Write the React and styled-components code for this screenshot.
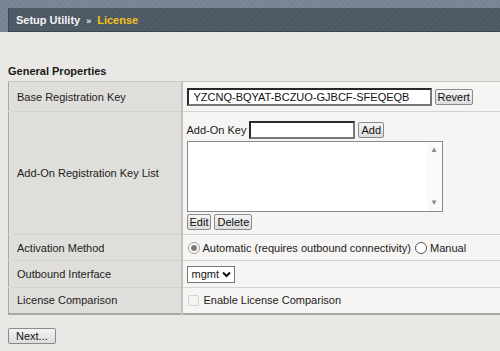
import React from 'react';
import styled, { createGlobalStyle } from 'styled-components';

const Global = createGlobalStyle`
	html, body {
		margin: 0;
		padding: 0;
		background: #e9e8e5;
		font-family: "Liberation Sans", Arial, sans-serif;
		font-size: 11px;
		color: #222;
	}
`;

const App = () => {
	return (
		<Page>
			<Global />
			<HeaderBand>
				<HeaderBar>
					<Crumb>Setup Utility</Crumb>
					<Sep>»</Sep>
					<Current>License</Current>
				</HeaderBar>
			</HeaderBand>
			<Content>
				<SectionTitle>General Properties</SectionTitle>
				<Props>
					<colgroup>
						<col style={{ width: 173 }} />
						<col />
					</colgroup>
					<tbody>
						<Row>
							<Label h={30}>Base Registration Key</Label>
							<Value>
								<Inline>
									<TextInput width={245} defaultValue="YZCNQ-BQYAT-BCZUO-GJBCF-SFEQEQB" />
									<Btn>Revert</Btn>
								</Inline>
							</Value>
						</Row>
						<Row>
							<Label h={123}>Add-On Registration Key List</Label>
							<Value>
								<Stack>
									<Inline>
										<span>Add-On Key</span>
										<TextInput width={106} />
										<Btn>Add</Btn>
									</Inline>
									<ListBox>
										<ScrollBar>
											<Arrow>▲</Arrow>
											<Arrow>▼</Arrow>
										</ScrollBar>
									</ListBox>
									<Inline>
										<Btn>Edit</Btn>
										<Btn>Delete</Btn>
									</Inline>
								</Stack>
							</Value>
						</Row>
						<Row>
							<Label h={26}>Activation Method</Label>
							<Value>
								<Inline>
									<Radio checked />
									<span>Automatic (requires outbound connectivity)</span>
									<Radio />
									<span>Manual</span>
								</Inline>
							</Value>
						</Row>
						<Row>
							<Label h={27}>Outbound Interface</Label>
							<Value>
								<Select>
									mgmt
									<svg width="9" height="7" viewBox="0 0 9 7">
										<path d="M1 1.5 L4.5 5 L8 1.5" fill="none" stroke="#111" strokeWidth="2" />
									</svg>
								</Select>
							</Value>
						</Row>
						<Row last>
							<Label h={26}>License Comparison</Label>
							<Value>
								<Inline>
									<Check />
									<span>Enable License Comparison</span>
								</Inline>
							</Value>
						</Row>
					</tbody>
				</Props>
				<Btn wide>Next...</Btn>
			</Content>
		</Page>
	);
};

export default App;

const Page = styled.div`
	width: 500px;
	height: 351px;
	overflow: hidden;
`;

const HeaderBand = styled.div`
	height: 32px;
	padding: 8px 0 0 8px;
	box-sizing: border-box;
	background: repeating-linear-gradient(
		-45deg,
		#7b8899 0px,
		#7b8899 2px,
		#75828f 2px,
		#75828f 4px
	);
`;

const HeaderBar = styled.div`
	height: 24px;
	box-sizing: border-box;
	display: flex;
	align-items: center;
	gap: 6px;
	padding-left: 7px;
	border-left: 1px solid #3f4852;
	border-bottom: 1px solid #3c444d;
	background: repeating-linear-gradient(
		-45deg,
		#505c68 0px,
		#505c68 2px,
		#4b5763 2px,
		#4b5763 4px
	);
	font-weight: bold;
	font-size: 11px;
`;

const Crumb = styled.span`
	color: #f4f4f4;
`;

const Sep = styled.span`
	color: #e8e8e8;
	font-size: 9px;
	margin-top: 3px;
`;

const Current = styled.span`
	color: #f3c21a;
`;

const Content = styled.div`
	padding: 33px 0 0 8px;
`;

const SectionTitle = styled.div`
	font-weight: bold;
	font-size: 11px;
	color: #1a1a1a;
	margin-bottom: 4px;
`;

const Props = styled.table`
	border-collapse: collapse;
	table-layout: fixed;
	width: 500px;
	border-top: 1px solid #c9c8c5;
	border-left: 1px solid #a9a8a6;
	border-bottom: 2px solid #a9a8a6;
	margin-bottom: 13px;
`;

const Row = styled.tr`
	border-bottom: ${(p) => (p.last ? 'none' : '1px solid #d4d3d0')};
`;

const Label = styled.td`
	height: ${(p) => p.h}px;
	box-sizing: border-box;
	background: #dfdedb;
	border-right: 2px solid #c3c2bf;
	padding: 0 8px;
	color: #222;
	white-space: nowrap;
	vertical-align: middle;
`;

const Value = styled.td`
	background: #f6f5f3;
	padding: 0 4px;
	vertical-align: middle;
`;

const Inline = styled.div`
	display: flex;
	align-items: center;
	gap: 3px;
`;

const Stack = styled.div`
	display: flex;
	flex-direction: column;
	gap: 2px;
	padding: 8px 0 4px;
`;

const TextInput = styled.input`
	width: ${(p) => p.width}px;
	height: 18px;
	box-sizing: border-box;
	border: 2px solid #2a2a2a;
	border-right-color: #777;
	border-bottom-color: #777;
	background: #fff;
	padding: 0 5px;
	font-family: "Liberation Sans", Arial, sans-serif;
	font-size: 11px;
	color: #111;
	outline: none;
`;

const Btn = styled.button`
	height: 16px;
	box-sizing: border-box;
	padding: 0 ${(p) => (p.wide ? '7px' : '2px')};
	border: 1px solid #8a8a8a;
	border-radius: 2px;
	background: linear-gradient(#f4f4f4, #dcdcdc);
	font-family: "Liberation Sans", Arial, sans-serif;
	font-size: 11px;
	color: #111;
	line-height: 14px;
`;

const ListBox = styled.div`
	width: 256px;
	height: 71px;
	box-sizing: border-box;
	border: 1px solid #8a8a8a;
	background: #fff;
	display: flex;
	justify-content: flex-end;
`;

const ScrollBar = styled.div`
	width: 15px;
	background: #fafafa;
	display: flex;
	flex-direction: column;
	justify-content: space-between;
	align-items: center;
	padding: 4px 0;
`;

const Arrow = styled.span`
	font-size: 8px;
	color: #8d8d8d;
	line-height: 8px;
`;

const Radio = styled.span`
	width: 12px;
	height: 12px;
	border-radius: 50%;
	border: 1px solid #555;
	background: #fff;
	box-sizing: border-box;
	display: inline-flex;
	align-items: center;
	justify-content: center;
	margin: 0 0 0 1px;
	&::after {
		content: '';
		width: 6px;
		height: 6px;
		border-radius: 50%;
		background: ${(p) => (p.checked ? '#7c7c7c' : 'transparent')};
	}
	${(p) => p.checked && 'border-color: #9a9a9a;'}
`;

const Select = styled.div`
	width: 48px;
	height: 17px;
	box-sizing: border-box;
	border: 1px solid #777;
	background: #fff;
	display: flex;
	align-items: center;
	justify-content: space-between;
	padding: 0 3px 0 4px;
	color: #111;
`;

const Check = styled.span`
	width: 11px;
	height: 11px;
	box-sizing: border-box;
	border: 1px solid #d2d2d2;
	border-radius: 2px;
	background: #f4f4f4;
	margin: 0 2px 0 1px;
`;
